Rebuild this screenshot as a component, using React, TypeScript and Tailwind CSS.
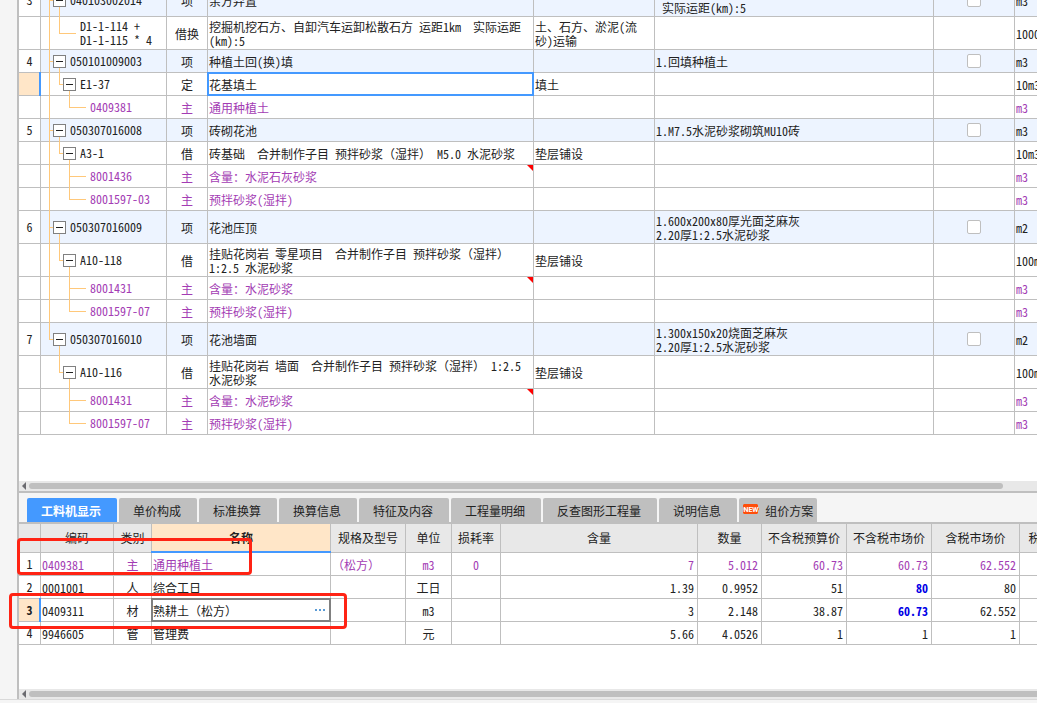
import React from 'react';
import { clsx } from 'clsx';

type Kind = 'item' | 'quota' | 'material';

interface BillRow {
  no?: string;
  kind: Kind;
  code: string;
  type: string;
  name: string;
  work?: string;
  feature?: string;
  unit: string;
  last?: boolean;
  leaf?: boolean;
  note?: boolean;
  selected?: boolean;
}

const billRows: BillRow[] = [
  { no: '3', kind: 'item', code: '040103002014', type: '项', name: '余方弃置', feature: '1.运距:\n 实际运距(km):5', unit: 'm3' },
  { kind: 'quota', code: 'D1-1-114 +\nD1-1-115 * 4', type: '借换', name: '挖掘机挖石方、自卸汽车运卸松散石方 运距1km  实际运距\n(km):5', work: '土、石方、淤泥(流\n砂)运输', unit: '1000m3', leaf: true },
  { no: '4', kind: 'item', code: '050101009003', type: '项', name: '种植土回(换)填', feature: '1.回填种植土', unit: 'm3' },
  { kind: 'quota', code: 'E1-37', type: '定', name: '花基填土', work: '填土', unit: '10m3', selected: true },
  { kind: 'material', code: '0409381', type: '主', name: '通用种植土', unit: 'm3', last: true },
  { no: '5', kind: 'item', code: '050307016008', type: '项', name: '砖砌花池', feature: '1.M7.5水泥砂浆砌筑MU10砖', unit: 'm3' },
  { kind: 'quota', code: 'A3-1', type: '借', name: '砖基础  合并制作子目 预拌砂浆（湿拌） M5.0 水泥砂浆', work: '垫层铺设', unit: '10m3' },
  { kind: 'material', code: '8001436', type: '主', name: '含量：水泥石灰砂浆', unit: 'm3', note: true },
  { kind: 'material', code: '8001597-03', type: '主', name: '预拌砂浆(湿拌)', unit: 'm3', last: true },
  { no: '6', kind: 'item', code: '050307016009', type: '项', name: '花池压顶', feature: '1.600x200x80厚光面芝麻灰\n2.20厚1:2.5水泥砂浆', unit: 'm2' },
  { kind: 'quota', code: 'A10-118', type: '借', name: '挂贴花岗岩 零星项目  合并制作子目 预拌砂浆（湿拌）\n1:2.5 水泥砂浆', work: '垫层铺设', unit: '100m2' },
  { kind: 'material', code: '8001431', type: '主', name: '含量：水泥砂浆', unit: 'm3', note: true },
  { kind: 'material', code: '8001597-07', type: '主', name: '预拌砂浆(湿拌)', unit: 'm3', last: true },
  { no: '7', kind: 'item', code: '050307016010', type: '项', name: '花池墙面', feature: '1.300x150x20烧面芝麻灰\n2.20厚1:2.5水泥砂浆', unit: 'm2' },
  { kind: 'quota', code: 'A10-116', type: '借', name: '挂贴花岗岩 墙面  合并制作子目 预拌砂浆（湿拌） 1:2.5\n水泥砂浆', work: '垫层铺设', unit: '100m2' },
  { kind: 'material', code: '8001431', type: '主', name: '含量：水泥砂浆', unit: 'm3', note: true },
  { kind: 'material', code: '8001597-07', type: '主', name: '预拌砂浆(湿拌)', unit: 'm3', last: true },
];

const lastItem = billRows.map((r) => r.kind).lastIndexOf('item');

const tabs = ['工料机显示', '单价构成', '标准换算', '换算信息', '特征及内容', '工程量明细', '反查图形工程量', '说明信息', '组价方案'];

const detailHeaders = ['编码', '类别', '名称', '规格及型号', '单位', '损耗率', '含量', '数量', '不含税预算价', '不含税市场价', '含税市场价', '税率'];

interface DetailRow {
  code: string;
  type: string;
  name: string;
  spec?: string;
  unit: string;
  loss?: string;
  values: string[];
  main?: boolean;
  priced?: boolean;
  editing?: boolean;
}

const detailRows: DetailRow[] = [
  { code: '0409381', type: '主', name: '通用种植土', spec: '（松方）', unit: 'm3', loss: '0', values: ['7', '5.012', '60.73', '60.73', '62.552'], main: true },
  { code: '0001001', type: '人', name: '综合工日', unit: '工日', values: ['1.39', '0.9952', '51', '80', '80'], priced: true },
  { code: '0409311', type: '材', name: '熟耕土（松方）', unit: 'm3', values: ['3', '2.148', '38.87', '60.73', '62.552'], priced: true, editing: true },
  { code: '9946605', type: '管', name: '管理费', unit: '元', values: ['5.66', '4.0526', '1', '1', '1'] },
];

const border = 'relative border-r border-b border-[#bfbfbf] whitespace-pre';
const cell = `${border} px-0 pt-0.5 pb-0 pl-px pr-[3px]`;
const centered = `${border} px-0 pt-0.5 pb-0 text-center`;
const numberCell = `${border} p-0 text-center`;

// Connector lines of the tree column; y values are relative to the row height
const TreeLines: React.FC<{ row: BillRow; index: number }> = ({ row, index }) => (
  <svg className="absolute inset-0 h-full w-full overflow-visible" fill="#ffc87a">
    {index <= lastItem && <rect x="8" y="0" width="1" height={index === lastItem ? '50%' : '105%'} />}
    {row.kind === 'item' && (
      <>
        <rect x="8" y="50%" width="5" height="1" />
        <rect x="18" y="50%" width="1" height="55%" />
      </>
    )}
    {row.kind === 'quota' && (
      <>
        <rect x="18" y="0" width="1" height="50%" />
        <rect x="18" y="50%" width={row.leaf ? '17' : '5'} height="1" />
        {!row.leaf && <rect x="28" y="50%" width="1" height="55%" />}
      </>
    )}
    {row.kind === 'material' && (
      <>
        <rect x="28" y="0" width="1" height={row.last ? '50%' : '105%'} />
        <rect x="28" y="50%" width="17" height="1" />
      </>
    )}
  </svg>
);

const Toggle: React.FC<{ label: string }> = ({ label }) => (
  <button type="button" aria-label={`折叠 ${label}`} className="flex h-[13px] w-[13px] shrink-0 items-center justify-center border border-[#808080] bg-white">
    <span className="h-px w-[7px] bg-[#222]" />
  </button>
);

const BillTable: React.FC = () => (
  <table className="-mt-4 w-full min-w-[1056px] table-fixed border-separate border-spacing-0">
    <colgroup>
      <col className="w-[22px]" />
      <col className="w-[126px]" />
      <col className="w-[41px]" />
      <col className="w-[326px]" />
      <col className="w-[121px]" />
      <col className="w-[279px]" />
      <col className="w-[81px]" />
      <col />
    </colgroup>
    <tbody>
      {billRows.map((row, i) => {
        const tall = i === 0 || [row.code, row.name, row.feature].some((t) => t?.includes('\n'));
        return (
          <tr
            key={i}
            className={clsx(
              tall ? 'h-[33px]' : 'h-[23px]',
              row.kind === 'item' && 'bg-[#edf4ff]',
              row.kind === 'material' && 'text-[#a33cb4]'
            )}
          >
            <td className={clsx(numberCell, row.selected ? 'bg-[#ffe6c8]' : 'bg-white')}>
              {row.no}
              {row.selected && <span className="absolute -right-px -top-px -bottom-px z-10 w-0.5 bg-[#4499ff]" />}
            </td>
            <td className={`${border} p-0`}>
              <TreeLines row={row} index={i} />
              <div
                className={clsx(
                  'relative flex items-center gap-1',
                  row.kind === 'item' && 'pl-3',
                  row.kind === 'quota' && (row.leaf ? 'pl-[39px]' : 'pl-[22px]'),
                  row.kind === 'material' && 'pl-[49px]'
                )}
              >
                {row.kind !== 'material' && !row.leaf && <Toggle label={row.code} />}
                <span>{row.code}</span>
              </div>
            </td>
            <td className={centered}>{row.type}</td>
            <td className={cell}>
              {row.name}
              {row.selected && <span className="absolute -inset-px z-10 border-2 border-[#4499ff]" />}
              {row.note && (
                <svg className="absolute right-0 top-0 h-1.5 w-1.5" viewBox="0 0 6 6">
                  <path d="M0 0H6V6Z" fill="#ff0000" />
                </svg>
              )}
            </td>
            <td className={cell}>{row.work}</td>
            <td className={cell}>{row.feature}</td>
            <td className={`${border} p-0`}>
              {row.kind === 'item' && (
                <input
                  type="checkbox"
                  aria-label={`${row.name} 选择`}
                  className="mx-auto block h-3.5 w-3.5 appearance-none rounded-xs border border-[#bfbfbf] bg-white"
                />
              )}
            </td>
            <td className={cell}>{row.unit}</td>
          </tr>
        );
      })}
    </tbody>
  </table>
);

const DetailTable: React.FC = () => (
  <table className="w-full min-w-[1043px] table-fixed border-separate border-spacing-0">
    <colgroup>
      <col className="w-[22px]" />
      <col className="w-[73px]" />
      <col className="w-[38px]" />
      <col className="w-[179px]" />
      <col className="w-[75px]" />
      <col className="w-[46px]" />
      <col className="w-[49px]" />
      <col className="w-[197px]" />
      <col className="w-[64px]" />
      <col className="w-[85px]" />
      <col className="w-[85px]" />
      <col className="w-[88px]" />
      <col />
    </colgroup>
    <thead>
      <tr className="h-[29px] bg-[#e8e8e8]">
        <th className={numberCell} />
        {detailHeaders.map((h) => (
          <th key={h} className={h === '名称' ? `${numberCell} bg-[#ffe6c8] font-bold` : `${numberCell} font-normal`}>
            {h}
            {h === '名称' && <span className="absolute -left-px -right-px -bottom-px z-10 h-0.5 bg-[#4499ff]" />}
          </th>
        ))}
      </tr>
    </thead>
    <tbody>
      {detailRows.map((row, i) => (
        <tr key={row.code} className={clsx('h-[23px]', row.main && 'text-[#a33cb4]')}>
          <td className={clsx(numberCell, 'text-[#222]', row.editing && 'bg-[#ffe6c8] font-bold')}>
            {i + 1}
            {row.editing && <span className="absolute -right-px -top-px -bottom-px z-10 w-0.5 bg-[#4499ff]" />}
          </td>
          <td className={cell}>{row.code}</td>
          <td className={centered}>{row.type}</td>
          {row.editing ? (
            <td className={cell}>
              <div className="absolute -inset-px z-10 flex items-center border-2 border-[#808080] bg-white">
                <input aria-label="名称" defaultValue={row.name} className="min-w-0 flex-1 pt-0.5 outline-none" />
                <button type="button" aria-label="选择材料" className="flex gap-0.5 px-1">
                  <span className="h-0.5 w-0.5 bg-[#5b9bd5]" />
                  <span className="h-0.5 w-0.5 bg-[#5b9bd5]" />
                  <span className="h-0.5 w-0.5 bg-[#5b9bd5]" />
                </button>
              </div>
            </td>
          ) : (
            <td className={cell}>{row.name}</td>
          )}
          <td className={cell}>{row.spec}</td>
          <td className={centered}>{row.unit}</td>
          <td className={centered}>{row.loss}</td>
          {row.values.map((v, j) => (
            <td key={j} className={clsx(cell, 'text-right', row.priced && j === 3 && 'font-bold text-[#0000e6]')}>
              {v}
            </td>
          ))}
          <td className={cell} />
        </tr>
      ))}
    </tbody>
  </table>
);

const ScrollBar: React.FC<{ full?: boolean }> = ({ full }) => (
  <div className={clsx('flex h-2.5 shrink-0 items-center bg-[#e8e8e8] pl-0.5', full ? 'pr-0' : 'pr-[34px]')}>
    <svg className="mr-0.5 h-2 w-1.5 shrink-0" viewBox="0 0 6 8">
      <path d="M5 0V8L1 4Z" fill="#6b6b70" />
    </svg>
    <div className={clsx('h-1.5 flex-1 bg-[#bfbfbf]', full ? 'rounded-l-full' : 'rounded-full')} />
  </div>
);

const NewBadge: React.FC = () => (
  <svg className="mb-1 h-2.5 w-4 shrink-0" viewBox="0 0 16 10">
    <path d="M1 0H14L15 1V3L16 5L15 7V9L14 10H1L0 9V7L1 5L0 3V1Z" fill="#ff4e0a" />
    <text x="8" y="8" fontSize="7" fontWeight="bold" fill="#fff" textAnchor="middle" fontFamily="Roboto, sans-serif">
      NEW
    </text>
  </svg>
);

export default function App() {
  return (
    <div className="flex h-screen flex-col overflow-hidden bg-[#f5f5f5] font-['Noto_Sans_Mono_CJK_SC','Liberation_Mono','Noto_Sans_CJK_SC',monospace] text-[12px] leading-[14px] text-[#222]">
      <div className="flex min-h-0 flex-1 border-b border-[#d9d9d9] pl-[17px]">
        <main className="flex min-w-0 flex-1 flex-col border-l-2 border-[#bfbfbf]">
          <section className="min-h-0 flex-1 overflow-hidden bg-white">
            <BillTable />
          </section>
          <ScrollBar />

          <nav className="flex shrink-0 gap-0.5 border-y-2 border-[#bfbfbf] pt-[5px] pl-2" role="tablist">
            {tabs.map((tab, i) => (
              <button
                key={tab}
                type="button"
                role="tab"
                aria-selected={i === 0}
                className={clsx(
                  'flex h-6 items-center whitespace-nowrap rounded-t-xs pt-0.5',
                  i === 0 ? 'bg-[#4499ff] font-bold text-white' : 'bg-[#bfbfbf]',
                  tab === '组价方案' ? 'gap-1.5 px-1' : 'pl-3.5 pr-4'
                )}
              >
                {tab === '组价方案' && <NewBadge />}
                {tab}
              </button>
            ))}
          </nav>

          {/* Resource breakdown of the selected quota */}
          <section className="relative min-h-[165px] shrink-0 bg-white">
            <div className="overflow-hidden">
              <DetailTable />
            </div>
            <div className="pointer-events-none absolute -left-0.5 top-3.5 z-20 h-[37px] w-[235px] rounded-sm border-3 border-[#ff2314]" />
            <div className="pointer-events-none absolute -left-2.5 top-[69px] z-20 h-9 w-[338px] rounded-sm border-3 border-[#ff2314]" />
          </section>
          <ScrollBar full />
        </main>
      </div>
      <div className="h-[3px] shrink-0" />
    </div>
  );
}
